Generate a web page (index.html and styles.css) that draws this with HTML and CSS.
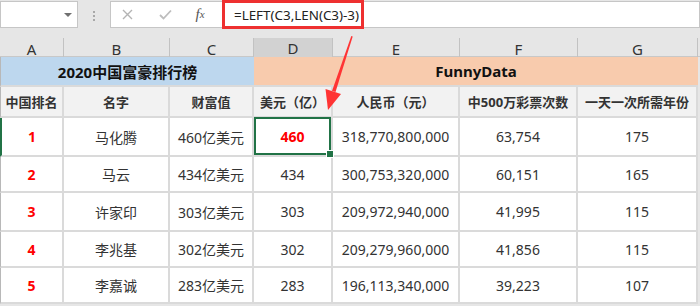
FILE: index.html
```html
<!DOCTYPE html>
<html lang="zh">
<head>
    <meta charset="UTF-8">
    <title>FunnyData 富豪排行</title>
    <link rel="stylesheet" href="styles.css">
</head>
<body>
    <div class="toolbar">
        <div class="namebox"><span class="caret"></span></div>
        <div class="grip"><i></i><i></i><i></i></div>
        <div class="formula">
            <div class="fbtns">
                <span class="fbtn w32">
                    <svg width="11" height="11" viewBox="0 0 11 11"><path d="M1 1L10 10M10 1L1 10" stroke="#b4b4b4" stroke-width="1.4" fill="none"/></svg>
                </span>
                <span class="fbtn w44">
                    <svg width="13" height="11" viewBox="0 0 13 11"><path d="M1 6L4.5 9.5L12 1.5" stroke="#bdbdbd" stroke-width="1.8" fill="none"/></svg>
                </span>
                <span class="fbtn w26 fx">f<sub>x</sub></span>
            </div>
            <div class="fcontent">=LEFT(C3,LEN(C3)-3)</div>
        </div>
    </div>

    <div class="colheads">
        <div class="ch">A</div>
        <div class="ch">B</div>
        <div class="ch">C</div>
        <div class="ch active">D</div>
        <div class="ch">E</div>
        <div class="ch">F</div>
        <div class="ch">G</div>
    </div>

    <div class="sheet">
        <div class="c title blue first">2020中国富豪排行榜</div>
        <div class="c title peach">FunnyData</div>

        <div class="c head first">中国排名</div>
        <div class="c head">名字</div>
        <div class="c head">财富值</div>
        <div class="c head">美元（亿）</div>
        <div class="c head">人民币（元）</div>
        <div class="c head">中500万彩票次数</div>
        <div class="c head">一天一次所需年份</div>

        <div class="c rank first marked">1</div>
        <div class="c">马化腾</div>
        <div class="c">460亿美元</div>
        <div class="c sel rank">460</div>
        <div class="c">318,770,800,000</div>
        <div class="c">63,754</div>
        <div class="c">175</div>

        <div class="c rank first">2</div>
        <div class="c">马云</div>
        <div class="c">434亿美元</div>
        <div class="c">434</div>
        <div class="c">300,753,320,000</div>
        <div class="c">60,151</div>
        <div class="c">165</div>

        <div class="c rank first">3</div>
        <div class="c">许家印</div>
        <div class="c">303亿美元</div>
        <div class="c">303</div>
        <div class="c">209,972,940,000</div>
        <div class="c">41,995</div>
        <div class="c">115</div>

        <div class="c rank first">4</div>
        <div class="c">李兆基</div>
        <div class="c">302亿美元</div>
        <div class="c">302</div>
        <div class="c">209,279,960,000</div>
        <div class="c">41,856</div>
        <div class="c">115</div>

        <div class="c rank first">5</div>
        <div class="c">李嘉诚</div>
        <div class="c">283亿美元</div>
        <div class="c">283</div>
        <div class="c">196,113,340,000</div>
        <div class="c">39,223</div>
        <div class="c">107</div>
    </div>

    <!-- 标注箭头 -->
    <svg class="arrow" width="700" height="306" viewBox="0 0 700 306">
        <polygon points="351.3,36 352.7,36.5 335.5,92 332,91" fill="#ff3434"/>
        <polygon points="328,110 325.5,89 341,94" fill="#ff3434"/>
    </svg>
</body>
</html>
```

FILE: styles.css
```css
body {
    margin: 0;
    width: 700px;
    height: 306px;
    overflow: hidden;
    position: relative;
    background: #e6e6e6;
    font-family: "Noto Sans", "Noto Sans CJK SC", sans-serif;
    color: #333;
}
.toolbar {
    display: flex;
    height: 30px;
    padding-top: 1px;
    box-sizing: border-box;
}
.namebox {
    width: 78px;
    height: 27px;
    background: white;
    border: 1px solid #c6c6c6;
    box-sizing: border-box;
    display: flex;
    align-items: center;
    justify-content: flex-end;
    padding-right: 5px;
}
.caret {
    width: 0;
    height: 0;
    border-left: 4px solid transparent;
    border-right: 4px solid transparent;
    border-top: 4px solid #707070;
}
.grip {
    width: 32px;
    display: flex;
    flex-direction: column;
    align-items: center;
    justify-content: center;
    gap: 2px;
}
.grip i {
    width: 2px;
    height: 2px;
    background: #a8a8a8;
}
.formula {
    flex: 1;
    height: 27px;
    background: white;
    border: 1px solid #c6c6c6;
    box-sizing: border-box;
    display: flex;
    align-items: center;
}
.fbtns {
    display: flex;
    align-items: center;
    width: 111px;
    height: 100%;
}
.fbtn {
    display: flex;
    align-items: center;
    justify-content: center;
}
.w32 { width: 32px; }
.w44 { width: 44px; }
.w26 { width: 26px; }
.fx {
    font-family: "Liberation Serif", serif;
    font-style: italic;
    font-size: 15px;
    color: #555;
    line-height: 1;
}
.fx sub {
    font-size: 11px;
    vertical-align: -1px;
}
.fcontent {
    height: 29px;
    width: 142px;
    box-sizing: border-box;
    border: 3px solid #ee3030;
    padding-left: 9px;
    display: flex;
    align-items: center;
    font-size: 13.4px;
    color: #222;
    white-space: nowrap;
}
.colheads,
.sheet {
    display: grid;
    grid-template-columns: 64px 106px 84px 79px 127px 118px 120px;
}
.colheads {
    height: 27px;
    border-bottom: 1px solid #c8c8c8;
    box-sizing: border-box;
}
.ch {
    margin-top: 8px;
    border-right: 1px solid #c2c2c2;
    display: flex;
    align-items: center;
    justify-content: center;
    font-size: 15px;
    color: #333;
}
.ch.active {
    background: #d2d2d2;
    border-bottom: 2px solid #217346;
}
.sheet {
    grid-template-rows: 30px 31px 39px 36px 39px 36px 36px;
    background: white;
    width: 698px;
}
.c {
    border-right: 2px solid #dadada;
    border-bottom: 2px solid #dadada;
    box-sizing: border-box;
    display: flex;
    align-items: center;
    justify-content: center;
    font-size: 14px;
    white-space: nowrap;
}
.first {
    border-left: 1px solid #b8b8b8;
}
.title {
    font-weight: bold;
    font-size: 15px;
    color: #111;
    border-right: none;
}
.blue {
    grid-column: span 3;
    background: #bdd7ee;
}
.peach {
    grid-column: span 4;
    background: #f8cbad;
}
.head {
    background: #f2f2f2;
    font-weight: bold;
    font-size: 13px;
}
.rank {
    color: #ff0000;
    font-weight: bold;
}
.marked {
    border-left: 2px solid #217346;
}
.sel {
    position: relative;
}
.sel::after {
    content: "";
    position: absolute;
    top: -1px;
    left: 0;
    right: 0;
    bottom: 0;
    border: 2px solid #217346;
}
.sel::before {
    content: "";
    position: absolute;
    right: -3px;
    bottom: -3px;
    width: 6px;
    height: 6px;
    background: #217346;
    border: 1px solid white;
    z-index: 1;
}
.arrow {
    position: absolute;
    left: 0;
    top: 0;
    pointer-events: none;
}
```
